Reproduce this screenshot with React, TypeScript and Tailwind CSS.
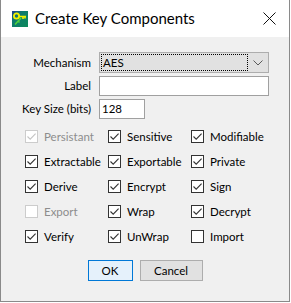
import React from 'react'

type Flag = { label: string; checked: boolean; disabled?: boolean }

const FLAGS: Flag[] = [
  { label: 'Persistant', checked: true, disabled: true },
  { label: 'Sensitive', checked: true },
  { label: 'Modifiable', checked: true },
  { label: 'Extractable', checked: true },
  { label: 'Exportable', checked: true },
  { label: 'Private', checked: true },
  { label: 'Derive', checked: true },
  { label: 'Encrypt', checked: true },
  { label: 'Sign', checked: true },
  { label: 'Export', checked: false, disabled: true },
  { label: 'Wrap', checked: true },
  { label: 'Decrypt', checked: true },
  { label: 'Verify', checked: true },
  { label: 'UnWrap', checked: true },
  { label: 'Import', checked: false },
]

function KeyIcon() {
  return (
    <svg width="16" height="16" viewBox="0 0 16 16" className="shrink-0">
      <defs>
        <linearGradient id="kbg" x1="0" y1="0" x2="1" y2="1">
          <stop offset="0" stopColor="#1c3f8c" />
          <stop offset="0.35" stopColor="#0f7a6e" />
          <stop offset="1" stopColor="#0c8a5a" />
        </linearGradient>
      </defs>
      <rect x="0" y="0" width="16" height="16" fill="url(#kbg)" />
      <circle cx="4.5" cy="5" r="2.6" fill="none" stroke="#f2f200" strokeWidth="1.8" />
      <path d="M6.8 5.5 L14 5.5 M11 5.5 L11 8 M13 5.5 L13 7.5" stroke="#f2f200" strokeWidth="1.6" fill="none" />
      <path d="M9 7 L3 13.5 M6 10 L7.5 11.5" stroke="#52d23a" strokeWidth="1.6" fill="none" />
    </svg>
  )
}

function CheckBox({ label, checked, disabled }: Flag) {
  return (
    <div className="flex items-center gap-[6px] h-[25px]">
      <span
        className={`w-[13px] h-[13px] border bg-white flex items-center justify-center ${
          disabled ? 'border-[#cccccc]' : 'border-[#333333]'
        }`}
      >
        {checked && (
          <svg width="11" height="11" viewBox="0 0 11 11">
            <path
              d="M1.5 5.5 L4.2 8.2 L9.6 2.6"
              fill="none"
              stroke={disabled ? '#c4c4c4' : '#333333'}
              strokeWidth="1.1"
            />
          </svg>
        )}
      </span>
      <span className={`text-[11.5px] leading-none ${disabled ? 'text-[#8d8d8d]' : 'text-black'}`}>{label}</span>
    </div>
  )
}

export default function App() {
  return (
    <div className="w-[291px] h-[303px] bg-white font-['Lato',sans-serif] text-black">
      <div className="w-[290px] h-[302px] flex flex-col border-x border-b border-[#8a8a8a]">
        {/* title bar */}
        <div className="h-[37px] bg-white flex items-center pl-[11px] pr-[13px]">
          <KeyIcon />
          <span className="ml-[7px] text-[15px] leading-none">Create Key Components</span>
          <div className="flex-1" />
          <svg width="13" height="13" viewBox="0 0 13 13">
            <path d="M0.5 0.5 L12.5 12.5 M12.5 0.5 L0.5 12.5" stroke="#111" strokeWidth="1" />
          </svg>
        </div>

        <div className="flex-1 bg-[#f0f0f0] flex flex-col pt-[15px]">
          <div className="grid grid-cols-[90px_170px] gap-x-[8px] gap-y-[3px] items-center text-[11.5px]">
            <span className="text-right">Mechanism</span>
            <div className="h-[21px] bg-[#e1e1e1] border border-[#adadad] flex p-[1px]">
              <div className="flex-1 border border-dotted border-black flex items-center pl-[1px]">AES</div>
              <div className="w-[19px] flex items-center justify-center">
                <svg width="10" height="6" viewBox="0 0 10 6">
                  <path d="M0.5 0.5 L5 5 L9.5 0.5" fill="none" stroke="#5a5a5a" strokeWidth="1" />
                </svg>
              </div>
            </div>

            <span className="text-right">Label</span>
            <div className="h-[20px] bg-white border border-[#a0a0a0]" />

            <span className="text-right">Key Size (bits)</span>
            <div className="h-[20px] w-[46px] bg-white border border-[#a0a0a0] flex items-center pl-[2px]">128</div>
          </div>

          <div className="grid grid-cols-[83px_83px_83px] pl-[24px] mt-[5px]">
            {FLAGS.map(f => (
              <CheckBox key={f.label} {...f} />
            ))}
          </div>

          <div className="flex justify-center gap-[7px] mt-[11px] text-[11.5px]">
            <button className="w-[45px] h-[21px] bg-[#e5f1fb] border border-[#0078d7]">OK</button>
            <button className="w-[63px] h-[21px] bg-[#e1e1e1] border border-[#adadad]">Cancel</button>
          </div>
        </div>
      </div>
    </div>
  )
}
